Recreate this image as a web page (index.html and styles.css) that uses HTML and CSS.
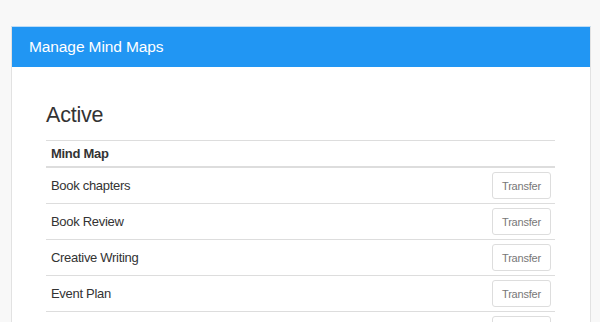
FILE: index.html
```html
<!DOCTYPE html>
<html>
<head>
<meta charset="utf-8">
<link rel="stylesheet" href="styles.css">
</head>
<body>
<div class="panel">
  <div class="panel-heading">Manage Mind Maps</div>
  <div class="panel-body">
    <h3 class="section-title">Active</h3>
    <table class="maps">
      <thead>
        <tr><th>Mind Map</th><th></th></tr>
      </thead>
      <tbody>
        <tr><td>Book chapters</td><td class="act"><button class="btn">Transfer</button></td></tr>
        <tr><td>Book Review</td><td class="act"><button class="btn">Transfer</button></td></tr>
        <tr><td>Creative Writing</td><td class="act"><button class="btn">Transfer</button></td></tr>
        <tr><td>Event Plan</td><td class="act"><button class="btn">Transfer</button></td></tr>
        <tr><td>Family Tree</td><td class="act"><button class="btn">Transfer</button></td></tr>
      </tbody>
    </table>
  </div>
</div>
</body>
</html>
```
FILE: styles.css
```css
html, body {
  margin: 0;
  padding: 0;
}
body {
  background: #f8f8f8;
  font-family: "Liberation Sans", Arial, sans-serif;
  color: #333;
  font-size: 13px;
  letter-spacing: -0.3px;
}
.panel {
  margin: 26px 9px 0 11px;
  background: #fff;
  border: 1px solid #e2e2e2;
  border-top-color: #bcdcf7;
}
.panel-heading {
  background: #2196f3;
  color: #fff;
  height: 40px;
  line-height: 40px;
  padding-left: 17px;
  font-size: 15.5px;
  letter-spacing: -0.1px;
}
.panel-body {
  padding: 37px 35px 0 34px;
}
.section-title {
  margin: 0 0 13px 0;
  font-size: 21.5px;
  font-weight: normal;
  line-height: 23px;
  letter-spacing: -0.2px;
  color: #333;
}
.maps {
  width: 100%;
  border-collapse: collapse;
  border-top: 1px solid #ddd;
}
.maps th {
  text-align: left;
  font-weight: bold;
  padding: 4px 5px 3px;
  line-height: 18px;
  border-bottom: 2px solid #ddd;
}
.maps td {
  padding: 4px 5px;
  line-height: 18px;
  border-bottom: 1px solid #ddd;
  height: 27px;
}
.maps td.act {
  text-align: right;
  padding-right: 4px;
}
.btn {
  font-family: "Liberation Sans", Arial, sans-serif;
  font-size: 11px;
  letter-spacing: -0.2px;
  color: #777;
  background: #fff;
  border: 1px solid #ddd;
  border-radius: 3px;
  width: 59px;
  height: 27px;
  padding: 0;
  vertical-align: middle;
}
```
